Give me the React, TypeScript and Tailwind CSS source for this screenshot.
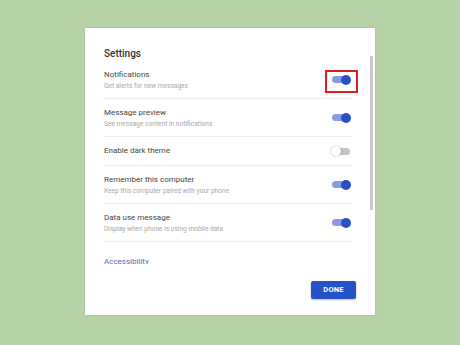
import React from 'react';

type Row = { title: string; sub?: string; on: boolean; boxed?: boolean };

const ROWS: Row[] = [
  { title: 'Notifications', sub: 'Get alerts for new messages', on: true, boxed: true },
  { title: 'Message preview', sub: 'See message content in notifications', on: true },
  { title: 'Enable dark theme', on: false },
  { title: 'Remember this computer', sub: 'Keep this computer paired with your phone', on: true },
  { title: 'Data use message', sub: 'Display when phone is using mobile data', on: true },
];

const Toggle: React.FC<{ on: boolean }> = ({ on }) => (
  <div className="relative w-[18px] h-[10px] flex items-center">
    <div className={`w-full h-[7px] rounded-full ${on ? 'bg-[#8a9be0]' : 'bg-[#c4c4c4]'}`} />
    {on ? (
      <div className="absolute right-[-1px] w-[10px] h-[10px] rounded-full bg-[#2a4fc9]" />
    ) : (
      <div className="absolute left-[-1px] w-[10px] h-[10px] rounded-full bg-white shadow-[0_0_2px_rgba(0,0,0,0.35)]" />
    )}
  </div>
);

export default function App() {
  return (
    <div
      className="w-[460px] h-[345px] bg-[#b7d3a6] overflow-hidden pt-[28px] pl-[85px]"
      style={{ fontFamily: 'Roboto, "Liberation Sans", sans-serif' }}
    >
      <div className="relative w-[290px] h-[287px] bg-white flex flex-col shadow-[0_0_2px_rgba(0,0,0,0.15)]">
        {/* scrollbar */}
        <div className="absolute right-[2px] top-[28px] w-[3px] h-[154px] bg-[#c9c9c9]" />

        <div className="h-[236px] overflow-hidden pl-[19px] pr-[23px] pt-[19px]">
          <h2 className="text-[10px] leading-[14px] font-medium text-[#333]">Settings</h2>
          {ROWS.map((r) => (
            <div
              key={r.title}
              className={`flex items-center justify-between border-b border-[#eeeeee] ${r.sub ? 'h-[38px]' : 'h-[29px]'}`}
            >
              <div className="flex flex-col">
                <span className="text-[8px] leading-[12px] text-[#444]">{r.title}</span>
                {r.sub && (
                  <span className="text-[6.6px] leading-[10px] text-[#a8a8a8]">{r.sub}</span>
                )}
              </div>
              <div className="relative mr-[2px]">
                <Toggle on={r.on} />
                {r.boxed && (
                  <div className="absolute left-[-7px] top-[-5px] w-[33px] h-[23px] border-2 border-[#e01b24]" />
                )}
              </div>
            </div>
          ))}
          <div className="pt-[14px] text-[8px] leading-[12px] text-[#5a66b8]">Accessibility</div>
        </div>

        <div className="flex-1 flex justify-end items-start pr-[19px] pt-[17px]">
          <button className="w-[45px] h-[18px] rounded-[2px] bg-[#2552c9] text-white text-[7.5px] font-bold tracking-[0.2px] shadow-[0_1px_2px_rgba(0,0,0,0.25)]">
            DONE
          </button>
        </div>
      </div>
    </div>
  );
}
